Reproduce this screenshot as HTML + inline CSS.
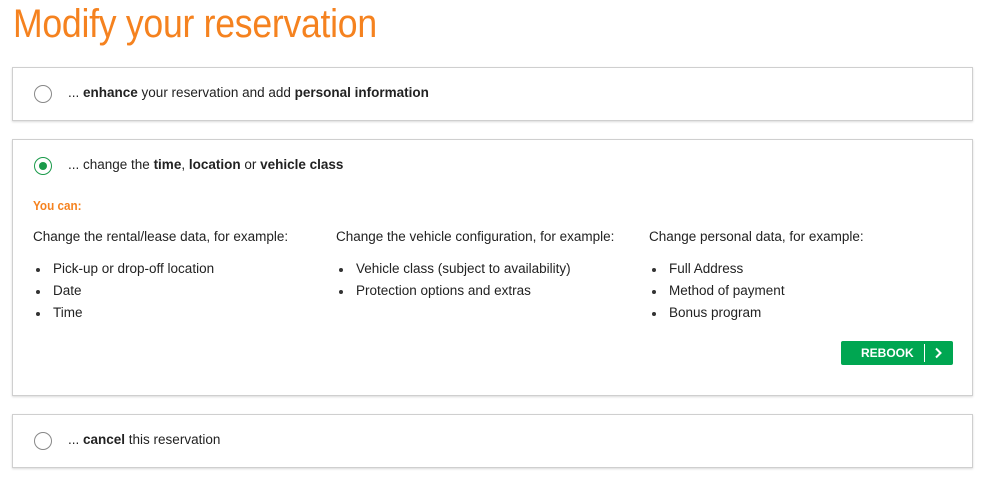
<!DOCTYPE html>
<html><head><meta charset="utf-8"><style>
body{margin:0;background:#fff;font-family:"Liberation Sans",sans-serif;color:#222;width:986px;height:493px;overflow:hidden;position:relative}
h1{position:absolute;left:13px;top:0;margin:0;font-weight:normal;color:#f5821f;font-size:40px;line-height:48px;transform:scaleX(.89);transform-origin:left;letter-spacing:-0.3px}
.box{position:absolute;left:12px;width:959px;border:1px solid #cfcfcf;box-shadow:0 1px 2px rgba(0,0,0,.15);background:#fff}
.rad{position:absolute;left:21px;width:18px;height:18px;border:1.5px solid #888;border-radius:50%;box-sizing:border-box}
.rad.on{border-color:#1a9a4a}
.rad.on:after{content:"";position:absolute;left:3.5px;top:3.5px;width:8px;height:8px;border-radius:50%;background:#1a9a4a}
.lbl{position:absolute;left:55px;font-size:13.5px}
.t{position:absolute;font-size:13.5px}
ul{margin:0;padding:0;list-style:none}
li{position:relative;padding-left:20px;height:22px;line-height:22px}
li:before{content:"";position:absolute;left:3px;top:10px;width:4px;height:4px;border-radius:50%;background:#333}
.btn{position:absolute;left:828px;top:201px;width:112px;height:24px;background:#00a651;border-radius:2px;color:#fff;font-weight:bold;font-size:12px}
</style></head><body>
<h1>Modify your reservation</h1>
<div class="box" style="top:67px;height:52px">
 <div class="rad" style="top:17px"></div>
 <div class="lbl" style="top:17px">... <b>enhance</b> your reservation and add <b>personal information</b></div>
</div>
<div class="box" style="top:139px;height:255px">
 <div class="rad on" style="top:17px"></div>
 <div class="lbl" style="top:17px">... change the <b>time</b>, <b>location</b> or <b>vehicle class</b></div>
 <div class="t" style="left:20px;top:58px;color:#f5821f;font-weight:bold;font-size:13px;transform:scaleX(.9);transform-origin:left">You can:</div>
 <div class="t" style="left:20px;top:89px">Change the rental/lease data, for example:</div>
 <div class="t" style="left:323px;top:89px">Change the vehicle configuration, for example:</div>
 <div class="t" style="left:636px;top:89px">Change personal data, for example:</div>
 <ul class="t" style="left:20px;top:118px"><li>Pick-up or drop-off location</li><li>Date</li><li>Time</li></ul>
 <ul class="t" style="left:323px;top:118px"><li>Vehicle class (subject to availability)</li><li>Protection options and extras</li></ul>
 <ul class="t" style="left:636px;top:118px"><li>Full Address</li><li>Method of payment</li><li>Bonus program</li></ul>
 <div class="btn"><span style="position:absolute;left:20px;top:5px">REBOOK</span><span style="position:absolute;left:83px;top:3px;width:1px;height:18px;background:#fff"></span>
 <svg style="position:absolute;left:92px;top:6px" width="10" height="12" viewBox="0 0 10 12"><path d="M3 1.5l4.5 4.5L3 10.5" stroke="#fff" stroke-width="2" fill="none"/></svg></div>
</div>
<div class="box" style="top:414px;height:52px">
 <div class="rad" style="top:17px"></div>
 <div class="lbl" style="top:17px">... <b>cancel</b> this reservation</div>
</div>
</body></html>
